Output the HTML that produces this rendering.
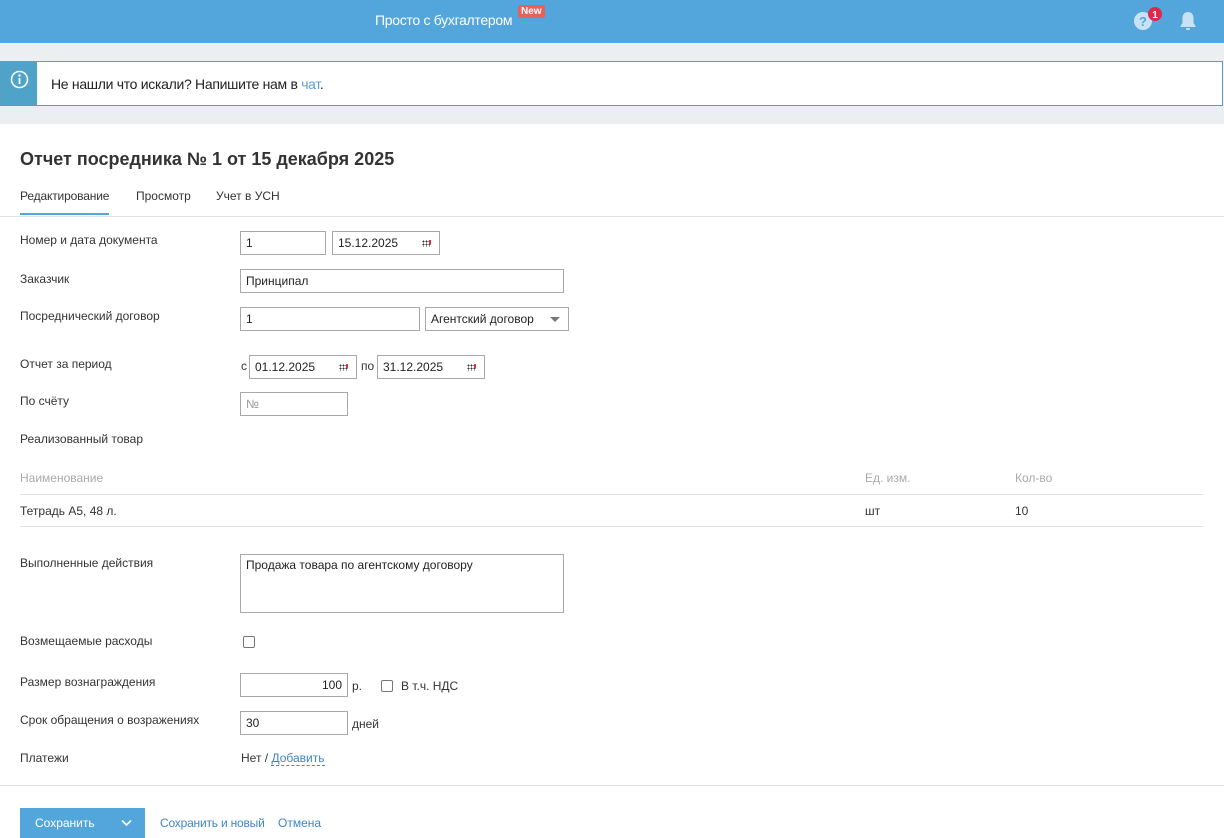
<!DOCTYPE html>
<html><head><meta charset="utf-8"><style>
*{box-sizing:border-box;margin:0;padding:0}
body{width:1224px;height:836px;overflow:hidden;font-family:"Liberation Sans",Arial,sans-serif;font-size:12px;color:#333;background:#fff;position:relative}
.a{position:absolute}
.hdr{left:0;top:0;width:1224px;height:43px;background:#53a6dc}
.gray{left:0;top:43px;width:1224px;height:81px;background:#eceff2}
.info{left:0;top:61px;width:1223px;height:45px;border:1px solid #5b9fbf;background:#fff}
.inp{position:absolute;height:24px;border:1px solid #a9a9a9;background:#fff;padding:0 5px;line-height:22px;font-size:12px;color:#222}
.lbl{position:absolute;left:20px;font-size:12px;color:#333}
.cal{position:absolute;right:8px;top:8px;width:9px;height:7px;background:
radial-gradient(circle,#333 40%,transparent 41%) 0 0/3px 3px}
.cal:after{content:"";position:absolute;right:0;top:0;width:2px;height:4px;background:#e03040}
.line{position:absolute;height:1px;background:#e2e2e2}
.cb{position:absolute;width:12px;height:12px;border:1px solid #777;border-radius:2px;background:#fff}
a{color:#3f86c5;text-decoration:none}
</style></head><body>
<div class="a hdr"></div>
<div class="a" style="left:375px;top:12px;color:#fff;font-size:14px;letter-spacing:-0.3px">Просто с бухгалтером</div>
<div class="a" style="left:518px;top:5px;background:#e8605a;color:#fff;font-size:10px;font-weight:bold;padding:1px 3px;border-radius:2px">New</div>
<svg class="a" style="left:1133px;top:6px" width="32" height="27"><circle cx="10" cy="15" r="9" fill="#c9e1f5"/><text x="10" y="20" text-anchor="middle" font-size="13" font-weight="bold" fill="#53a6dc" font-family="Liberation Sans">?</text><circle cx="22" cy="8" r="7" fill="#e0284e"/><text x="22" y="12" text-anchor="middle" font-size="10" font-weight="bold" fill="#fff" font-family="Liberation Sans">1</text></svg>
<svg class="a" style="left:1179px;top:11px" width="18" height="20"><path d="M9 1c-3.5 0-5.5 2.5-5.5 6v5L1.5 15v1h15v-1l-2-3V7c0-3.5-2-6-5.5-6z" fill="#c9e1f5"/><rect x="7" y="17" width="4" height="2" rx="1" fill="#c9e1f5"/></svg>
<div class="a gray"></div>
<div class="a info"><div class="a" style="left:0;top:0;width:36px;height:43px;background:#4fa3c8"></div>
<svg class="a" style="left:9px;top:8px" width="19" height="19"><circle cx="9.5" cy="9.5" r="8" fill="none" stroke="#fff" stroke-width="1.6"/><circle cx="9.5" cy="5.5" r="1.2" fill="#fff"/><rect x="8.6" y="8" width="1.8" height="6" fill="#fff"/></svg>
<div class="a" style="left:50px;top:14px;font-size:14px;color:#222;letter-spacing:-0.3px">Не нашли что искали? Напишите нам в <a style="color:#5b9fd8">чат</a>.</div></div>
<div class="a" style="left:20px;top:149px;font-size:18px;font-weight:bold;color:#333">Отчет посредника № 1 от 15 декабря 2025</div>
<div class="a" style="left:20px;top:189px;letter-spacing:-0.15px">Редактирование</div>
<div class="a" style="left:20px;top:213px;width:89px;height:2px;background:#53a6dc"></div>
<div class="a" style="left:136px;top:189px">Просмотр</div>
<div class="a" style="left:216px;top:189px">Учет в УСН</div>
<div class="line" style="left:0;top:216px;width:1224px"></div>

<div class="lbl" style="top:233px">Номер и дата документа</div>
<div class="inp" style="left:240px;top:231px;width:86px">1</div>
<div class="inp" style="left:332px;top:231px;width:108px">15.12.2025<span class="cal"></span></div>
<div class="lbl" style="top:272px">Заказчик</div>
<div class="inp" style="left:240px;top:269px;width:324px">Принципал</div>
<div class="lbl" style="top:309px">Посреднический договор</div>
<div class="inp" style="left:240px;top:307px;width:180px">1</div>
<div class="inp" style="left:425px;top:307px;width:144px">Агентский договор<span class="a" style="right:8px;top:9px;border:5px solid transparent;border-top:5px solid #777;border-bottom:0"></span></div>
<div class="lbl" style="top:357px">Отчет за период</div>
<div class="a" style="left:241px;top:359px">с</div>
<div class="inp" style="left:249px;top:355px;width:108px">01.12.2025<span class="cal"></span></div>
<div class="a" style="left:361px;top:359px">по</div>
<div class="inp" style="left:377px;top:355px;width:108px">31.12.2025<span class="cal"></span></div>
<div class="lbl" style="top:394px">По счёту</div>
<div class="inp" style="left:240px;top:392px;width:108px;color:#999">№</div>
<div class="lbl" style="top:432px">Реализованный товар</div>
<div class="a" style="left:20px;top:471px;color:#aaa">Наименование</div>
<div class="a" style="left:865px;top:471px;color:#aaa">Ед. изм.</div>
<div class="a" style="left:1015px;top:471px;color:#aaa">Кол-во</div>
<div class="line" style="left:20px;top:494px;width:1183px"></div>
<div class="a" style="left:20px;top:504px">Тетрадь А5, 48 л.</div>
<div class="a" style="left:865px;top:504px">шт</div>
<div class="a" style="left:1015px;top:504px">10</div>
<div class="line" style="left:20px;top:526px;width:1183px"></div>
<div class="lbl" style="top:556px">Выполненные действия</div>
<div class="inp" style="left:240px;top:554px;width:324px;height:59px;line-height:20px">Продажа товара по агентскому договору</div>
<div class="lbl" style="top:634px">Возмещаемые расходы</div>
<div class="cb" style="left:243px;top:636px"></div>
<div class="lbl" style="top:675px">Размер вознаграждения</div>
<div class="inp" style="left:240px;top:673px;width:108px;text-align:right">100</div>
<div class="a" style="left:352px;top:679px">р.</div>
<div class="cb" style="left:381px;top:680px"></div>
<div class="a" style="left:401px;top:679px">В т.ч. НДС</div>
<div class="lbl" style="top:713px">Срок обращения о возражениях</div>
<div class="inp" style="left:240px;top:711px;width:108px">30</div>
<div class="a" style="left:352px;top:717px">дней</div>
<div class="lbl" style="top:751px">Платежи</div>
<div class="a" style="left:241px;top:751px">Нет / <a style="border-bottom:1px dashed #3f86c5">Добавить</a></div>
<div class="line" style="left:0;top:785px;width:1224px"></div>
<div class="a" style="left:20px;top:808px;width:125px;height:30px;background:#53a6dc;color:#fff;font-size:12px"><span class="a" style="left:15px;top:8px">Сохранить</span>
<svg class="a" style="left:101px;top:11px" width="11" height="8"><path d="M1 1.5l4.5 4.5 4.5-4.5" fill="none" stroke="#fff" stroke-width="1.6"/></svg></div>
<div class="a" style="left:160px;top:816px;letter-spacing:-0.2px"><a>Сохранить и новый</a></div>
<div class="a" style="left:278px;top:816px"><a>Отмена</a></div>
</body></html>
